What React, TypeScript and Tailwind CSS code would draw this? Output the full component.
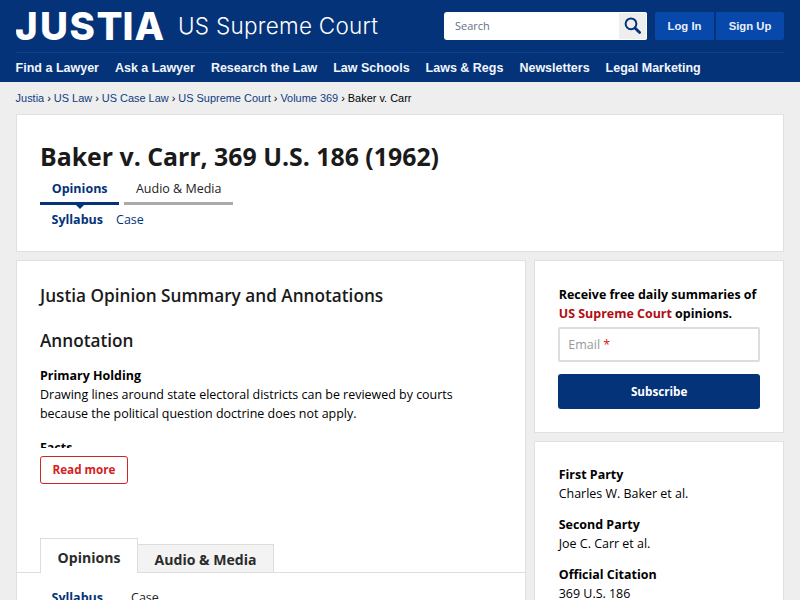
const navItems = [
  'Find a Lawyer',
  'Ask a Lawyer',
  'Research the Law',
  'Law Schools',
  'Laws & Regs',
  'Newsletters',
  'Legal Marketing',
];

const crumbs = ['Justia', 'US Law', 'US Case Law', 'US Supreme Court', 'Volume 369'];

const caseInfo = [
  { label: 'First Party', value: 'Charles W. Baker et al.' },
  { label: 'Second Party', value: 'Joe C. Carr et al.' },
  { label: 'Official Citation', value: '369 U.S. 186' },
];

function Logo() {
  return (
    <a href="#" aria-label="Justia US Supreme Court" className="block">
      <svg width="370" height="52" viewBox="0 0 370 52" fill="#fff">
        <text x="-1 24 53.5 80.5 106.5 118.5" y="39.5" className="font-['Inter',sans-serif] text-[38.5px] font-extrabold">
          JUSTIA
        </text>
        <text x="162" y="34" textLength="200" lengthAdjust="spacing" className="font-['Inter',sans-serif] text-[22.5px] font-light">
          US Supreme Court
        </text>
      </svg>
    </a>
  );
}

function Header() {
  return (
    <header className="h-[82px] bg-[#04337a] px-4 font-['Liberation_Sans',Arial,sans-serif] text-white">
      <div className="flex h-[52px] justify-between">
        <Logo />
        <div className="flex pt-3">
          <form className="flex h-7 w-[203px] overflow-hidden rounded-[3px] bg-white">
            <input
              type="text"
              placeholder="Search"
              className="w-[175px] pl-[11px] font-['Open_Sans',sans-serif] text-[10.94px] placeholder-[#5f7088] outline-none"
            />
            <button type="button" aria-label="Search" className="flex w-7 items-center justify-center border-y border-r border-white bg-[#eee]">
              <svg width="18" height="18" viewBox="0 0 18 18" fill="none" stroke="#04337a">
                <circle cx="7" cy="6.8" r="5.4" strokeWidth="2" />
                <path d="M11 11l4.6 4.6" strokeWidth="2.8" strokeLinecap="round" />
              </svg>
            </button>
          </form>
          <div className="ml-2 flex gap-[2px] text-[11.3px] font-bold text-[#e9effa]">
            <a href="#" className="flex h-7 w-[59px] items-center justify-center rounded-l-[2px] bg-[#0848ab] pt-px">Log In</a>
            <a href="#" className="flex h-7 w-[68px] items-center justify-center rounded-r-[2px] bg-[#0848ab] pt-px">Sign Up</a>
          </div>
        </div>
      </div>
      <nav className="-ml-[0.4px] flex h-[30px] items-center gap-4 border-t border-[#0d4189] pt-px text-[12.5px] font-bold text-[#f2f6fc]">
        {navItems.map((item) => (
          <a key={item} href="#" className="whitespace-nowrap">{item}</a>
        ))}
      </nav>
    </header>
  );
}

function TitleCard() {
  return (
    <section className="mx-4 h-[138px] border border-[#e0e0e0] bg-white px-[23px] pt-6">
      <h1 className="text-[24.85px] leading-[34px] font-bold text-[#1a1a1a]">Baker v. Carr, 369 U.S. 186 (1962)</h1>
      <div className="mt-[3px] flex gap-[5px] text-[12.5px]">
        <a href="#" className="relative h-[29px] border-b-3 border-[#04337a] px-[11.7px] pt-[3px] leading-[19px] font-bold text-[#04337a]">
          Opinions
          <span className="absolute top-full left-1/2 mt-[2px] -translate-x-1/2 border-x-5 border-t-5 border-x-transparent border-t-[#04337a]" />
        </a>
        <a href="#" className="h-[29px] border-b-3 border-[#aaa] px-[11.7px] pt-[3px] leading-[19px] text-[#222]">Audio &amp; Media</a>
      </div>
      <div className="mt-[5px] flex gap-[13px] pl-[11.5px] text-[12.5px] leading-[19px] text-[#04337a]">
        <a href="#" className="font-bold">Syllabus</a>
        <a href="#">Case</a>
      </div>
    </section>
  );
}

function Summary() {
  return (
    <main className="h-[360px] w-[511px] border border-[#e0e0e0] bg-white">
      <div className="px-[23px] pt-[22px]">
        <h2 className="text-[17.2px] leading-[26px] font-semibold text-[#1a1a1a]">Justia Opinion Summary and Annotations</h2>
        <h2 className="mt-[19px] text-[17.2px] leading-[26px] font-semibold text-[#1a1a1a]">Annotation</h2>
        <div className="mt-3 h-[82px] overflow-hidden text-[12.46px] leading-[19px]">
          <p>
            <strong>Primary Holding</strong>
            <br />
            Drawing lines around state electoral districts can be reviewed by courts
            <br />
            because the political question doctrine does not apply.
          </p>
          <p className="mt-[15px]"><strong>Facts</strong></p>
        </div>
        <button className="mt-2 block h-7 w-[88px] rounded-[3px] border border-[#d02525] text-[11.7px] font-bold text-[#d32222]">
          Read more
        </button>
      </div>
      <div className="mt-[54px] flex h-[35px] items-end text-[14.06px] font-bold text-[#2b2b2b]">
        <div className="w-[23px] self-stretch border-b border-[#ddd]" />
        <a href="#" className="flex h-[35px] w-[98px] items-center justify-center border border-b-0 border-[#ddd] pt-[3px]">Opinions</a>
        <a href="#" className="flex h-[29px] w-[136px] items-center justify-center border border-l-0 border-[#ddd] bg-[#f3f3f3] pt-[3px]">Audio &amp; Media</a>
        <div className="flex-1 self-stretch border-b border-[#ddd]" />
      </div>
      <div className="flex gap-7 pt-[15px] pl-[34.5px] text-[12.5px] leading-[19px]">
        <a href="#" className="font-bold text-[#04337a]">Syllabus</a>
        <a href="#" className="text-[#222]">Case</a>
      </div>
    </main>
  );
}

function Sidebar() {
  return (
    <aside className="flex w-[250px] flex-col gap-2">
      <section className="h-[173px] border border-[#e0e0e0] bg-white px-[23px] pt-6">
        <p className="pl-[0.4px] text-[12.46px] leading-[19px] font-bold whitespace-nowrap">
          Receive free daily summaries of
          <br />
          <span className="text-[#b10d14]">US Supreme Court</span> opinions.
        </p>
        <div className="mt-1 flex h-[35px] items-center rounded-[2px] border-2 border-[#ddd] px-2 pt-[2px] text-[12.5px] text-[#999]">
          Email&nbsp;<span className="text-[#d32222]">*</span>
        </div>
        <button className="mt-3 block h-[35px] w-full rounded-[3px] bg-[#04337a] text-[11.7px] font-bold text-white">Subscribe</button>
      </section>
      <section className="flex h-[200px] flex-col gap-3 border border-[#e0e0e0] bg-white px-[23.4px] pt-[23px] text-[12.46px] leading-[19px]">
        {caseInfo.map((info) => (
          <div key={info.label}>
            <strong className="block">{info.label}</strong>
            <span>{info.value}</span>
          </div>
        ))}
      </section>
    </aside>
  );
}

export default function App() {
  return (
    <div className="h-[600px] w-[800px] overflow-hidden bg-[#eee] font-['Open_Sans','Noto_Sans',sans-serif] text-black">
      <Header />
      <div className="flex h-8 items-center gap-[3px] px-[15.6px] font-['Liberation_Sans',Arial,sans-serif] text-[10.94px]">
        {crumbs.map((crumb) => (
          <span key={crumb} className="flex gap-[3px]">
            <a href="#" className="text-[#0f3c80]">{crumb}</a>
            <span>›</span>
          </span>
        ))}
        <span>Baker v. Carr</span>
      </div>
      <TitleCard />
      <div className="mt-2 flex gap-2 px-4">
        <Summary />
        <Sidebar />
      </div>
    </div>
  );
}
